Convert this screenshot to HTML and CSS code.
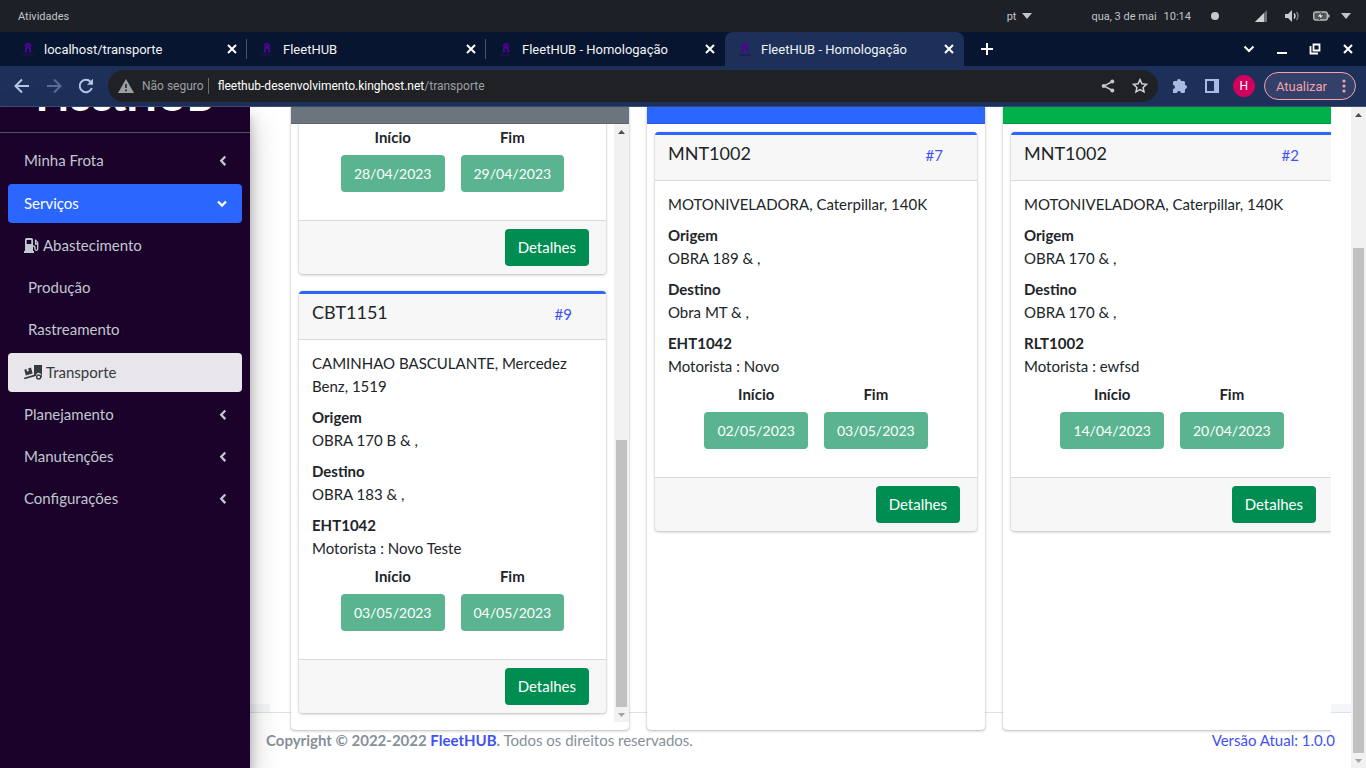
FILE: index.html
```html
<!DOCTYPE html>
<html lang="pt-BR">
<head>
<meta charset="utf-8">
<title>FleetHUB - Homologação</title>
<link rel="stylesheet" href="styles.css">
</head>
<body>
<svg class="defs" aria-hidden="true">
  <symbol id="logo" viewBox="0 0 16 16"><g fill="none" stroke="#4b058f" stroke-width="1.9"><path d="M5.500 5.600V4.600a2.600 2.600 0 0 1 5 0v1M5.800 11.500V9a2.200 2.200 0 0 1 4.400 0v2.500M5.500 7.500L8 5.200l2.500 2.300"/></g><path d="M2 14h12" stroke="#2c0b58" stroke-width="1.500" stroke-dasharray="1.500 .5"/></symbol>
  <symbol id="x" viewBox="0 0 12 12"><path d="M2 2l8 8M10 2l-8 8" stroke="currentColor" stroke-width="2" fill="none"/></symbol>
  <symbol id="left" viewBox="0 0 8 12"><path d="M6.300 1.500L2.200 5.800l4.100 4.300" fill="none" stroke="currentColor" stroke-width="2.300"/></symbol>
  <symbol id="tri" viewBox="0 0 10 6"><path d="M0 0h10L5 6z" fill="currentColor"/></symbol>
</svg>

<header class="desktop">
  <span>Atividades</span>
  <div class="desktop-right">
    <span class="lang">pt <svg width="10" height="6"><use href="#tri"/></svg></span>
    <span class="clock"><span>qua, 3 de mai</span><span>10:14</span></span>
    <svg class="dot" width="8" height="8"><circle cx="4" cy="4" r="4" fill="#c8c8c8"/></svg>
    <svg width="12" height="12" viewBox="0 0 12 12"><path d="M12 0v12H0z" fill="#6d6f72"/><path d="M9 3v9H0z" fill="#d0d0d0"/></svg>
    <svg class="vol" width="16" height="12" viewBox="0 0 16 12"><path d="M0 4h3l4-4v12L3 8H0z" fill="#ccc"/><path d="M9 3.500q2 2.500 0 5" fill="none" stroke="#ccc" stroke-width="1.500"/><path d="M11.500 2q3 4 0 8" fill="none" stroke="#777" stroke-width="1.500"/></svg>
    <svg class="bat" width="17" height="10" viewBox="0 0 17 10"><rect x=".7" y="1" width="13.600" height="8" rx="2" fill="#55575b" stroke="#bbb" stroke-width="1.400"/><path d="M15 3.500h1.500v3H15z" fill="#bbb"/><path d="M8 1L4 6h3l-1 3 5-5H8z" fill="#ddd" stroke="#333" stroke-width=".7"/></svg>
    <svg width="10" height="6"><use href="#tri"/></svg>
  </div>
</header>

<nav class="tabs" aria-label="Abas">
  <div class="tab"><svg width="16" height="16"><use href="#logo"/></svg><span class="tab-title">localhost/transporte</span><button class="plain" aria-label="Fechar"><svg width="12" height="12"><use href="#x"/></svg></button></div>
  <div class="tab"><svg width="16" height="16"><use href="#logo"/></svg><span class="tab-title">FleetHUB</span><button class="plain" aria-label="Fechar"><svg width="12" height="12"><use href="#x"/></svg></button></div>
  <div class="tab last"><svg width="16" height="16"><use href="#logo"/></svg><span class="tab-title">FleetHUB - Homologação</span><button class="plain" aria-label="Fechar"><svg width="12" height="12"><use href="#x"/></svg></button></div>
  <div class="tab active"><svg width="16" height="16"><use href="#logo"/></svg><span class="tab-title">FleetHUB - Homologação</span><button class="plain" aria-label="Fechar"><svg width="12" height="12"><use href="#x"/></svg></button></div>
  <button class="plain new" aria-label="Nova aba"><svg width="12" height="12"><path d="M6 0v12M0 6h12" stroke="#fff" stroke-width="2"/></svg></button>
  <div class="window-btns">
    <button class="plain" aria-label="Pesquisar abas"><svg width="12" height="12"><path d="M1.500 3.500L6 8l4.500-4.500" fill="none" stroke="#fff" stroke-width="2"/></svg></button>
    <button class="plain" aria-label="Minimizar"><svg width="12" height="12"><path d="M1 10h10" stroke="#fff" stroke-width="2"/></svg></button>
    <button class="plain" aria-label="Restaurar"><svg width="12" height="12"><path d="M4.500 1.500h6v6h-6zM1.500 3v7.500H9" fill="none" stroke="#fff" stroke-width="1.800"/></svg></button>
    <button class="plain" aria-label="Fechar janela"><svg width="12" height="12"><use href="#x"/></svg></button>
  </div>
</nav>

<div class="toolbar">
  <button class="plain nav-btn" aria-label="Voltar"><svg width="16" height="16"><path d="M15 8H2M8 1.500L1.500 8 8 14.500" fill="none" stroke="#b4c6e8" stroke-width="2"/></svg></button>
  <button class="plain nav-btn" aria-label="Avançar"><svg width="16" height="16"><path d="M1 8h13M8 1.500L14.500 8 8 14.500" fill="none" stroke="#5a6c94" stroke-width="2"/></svg></button>
  <button class="plain nav-btn" aria-label="Recarregar"><svg width="16" height="16"><path d="M13.800 10A6.200 6.200 0 1 1 12.500 3.700L14 5.200" fill="none" stroke="#b4c6e8" stroke-width="2"/><path d="M15 .8v6H9z" fill="#b4c6e8"/></svg></button>
  <div class="omnibox">
    <svg width="16" height="14" viewBox="0 0 16 14"><path d="M8 0l8 14H0z" fill="#9aa0a6"/><path d="M8 5v4M8 10.500v1.800" stroke="#202124" stroke-width="1.600"/></svg>
    <span class="insecure">Não seguro</span>
    <span class="url">fleethub-desenvolvimento.kinghost.net<span class="path">/transporte</span></span>
    <button class="plain" aria-label="Compartilhar"><svg width="14" height="14"><path d="M11.500 2.500L3 7l8.500 4.500" fill="none" stroke="#c4c7ca" stroke-width="1.500"/><g fill="#c4c7ca"><circle cx="11.300" cy="2.500" r="2"/><circle cx="2.700" cy="7" r="2"/><circle cx="11.300" cy="11.500" r="2"/></g></svg></button>
    <button class="plain" aria-label="Favoritar"><svg width="16" height="16"><path d="M8 1.600l1.900 4.200 4.600.5-3.400 3.100.9 4.500L8 11.600l-4 2.300.9-4.500L1.500 6.300l4.600-.5z" fill="none" stroke="#d0d2d5" stroke-width="1.500"/></svg></button>
  </div>
  <button class="plain ext" aria-label="Extensões"><svg width="16" height="16" viewBox="0 0 16 16"><path d="M1 4.500Q1 3 2.500 3H5a2 2 0 1 1 4 0h2.500Q13 3 13 4.500V7a2 2 0 1 1 0 4v2.500q0 1.500-1.500 1.500H9a2 2 0 1 0-4 0H1v-4a2 2 0 1 0 0-4z" fill="#a9bbe0"/></svg></button>
  <button class="plain ext" aria-label="Painel lateral"><svg width="14" height="14"><path d="M0 0h14v14H0zM2 2v10h7V2z" fill="#a9bbe0" fill-rule="evenodd"/></svg></button>
  <span class="avatar">H</span>
  <button class="update">Atualizar <svg width="4" height="14" fill="#f5a3a8"><circle cx="2" cy="2" r="1.600"/><circle cx="2" cy="7" r="1.600"/><circle cx="2" cy="12" r="1.600"/></svg></button>
</div>

<div class="page">
  <aside class="sidebar">
    <div class="brand"><span>FleetHUB</span></div>
    <nav class="menu">
      <a href="#">Minha Frota<svg class="caret" width="8" height="12"><use href="#left"/></svg></a>
      <a href="#" class="open">Serviços<svg class="caret" width="10" height="8"><path d="M1 1.500l4 4 4-4" fill="none" stroke="#fff" stroke-width="2.300"/></svg></a>
      <a href="#"><svg width="15" height="15" viewBox="0 0 15 15"><path d="M1 13V1.500Q1 0 2.500 0h5Q9 0 9 1.500V13h1v2H0v-2zM2.700 2v4h4.600V2z" fill="currentColor" fill-rule="evenodd"/><path d="M9 8q2 0 2 2v1q0 1.300 1.300 1.300T13.700 11V4.500L11 1.700M11.500 3v3H13.500" fill="none" stroke="currentColor" stroke-width="1.300"/></svg>Abastecimento</a>
      <a href="#" class="sub">Produção</a>
      <a href="#" class="sub">Rastreamento</a>
      <a href="#" class="current"><svg width="18" height="15" viewBox="0 0 18 15"><path d="M10 0h8v12.200h-1.200a2.700 2.700 0 1 0-4.800-1.200L.4 14.300 0 12.700l10-2.900z" fill="currentColor"/><circle cx="14.700" cy="12" r="2" fill="none" stroke="currentColor" stroke-width="1.400"/><path d="M.3 4.700l2-.6.8 2.500 1.800-.5L4.100 3.600l2.900-1L8.700 8.500 1.800 10.600z" fill="currentColor"/></svg>Transporte</a>
      <a href="#">Planejamento<svg class="caret" width="8" height="12"><use href="#left"/></svg></a>
      <a href="#">Manutenções<svg class="caret" width="8" height="12"><use href="#left"/></svg></a>
      <a href="#">Configurações<svg class="caret" width="8" height="12"><use href="#left"/></svg></a>
    </nav>
  </aside>

  <main class="main">
    <div class="content">
      <div class="board">
        <section class="column">
          <div class="column-head grey"></div>
          <div class="scroll-row">
            <div class="list end">
              <article class="card partial">
                <div class="dates"><div><b>Início</b><button class="date">28/04/2023</button></div><div><b>Fim</b><button class="date">29/04/2023</button></div></div>
                <footer><button class="details">Detalhes</button></footer>
              </article>
              <article class="card">
                <header><h3>CBT1151</h3><a href="#">#9</a></header>
                <div class="info">
                  <p>CAMINHAO BASCULANTE, Mercedez Benz, 1519</p>
                  <p><b>Origem</b><br>OBRA 170 B &amp; ,</p>
                  <p><b>Destino</b><br>OBRA 183 &amp; ,</p>
                  <p><b>EHT1042</b><br>Motorista : Novo Teste</p>
                </div>
                <div class="dates"><div><b>Início</b><button class="date">03/05/2023</button></div><div><b>Fim</b><button class="date">04/05/2023</button></div></div>
                <footer><button class="details">Detalhes</button></footer>
              </article>
            </div>
            <div class="scrollbar"><svg width="7" height="4"><path d="M0 4h7L3.500 0z" fill="#505050"/></svg><div class="track inner"><div class="thumb"></div></div><svg width="7" height="4"><path d="M0 0h7L3.500 4z" fill="#a3a3a3"/></svg></div>
          </div>
        </section>

        <section class="column">
          <div class="column-head blue"></div>
          <div class="list">
            <article class="card">
              <header><h3>MNT1002</h3><a href="#">#7</a></header>
              <div class="info">
                <p>MOTONIVELADORA, Caterpillar, 140K</p>
                <p><b>Origem</b><br>OBRA 189 &amp; ,</p>
                <p><b>Destino</b><br>Obra MT &amp; ,</p>
                <p><b>EHT1042</b><br>Motorista : Novo</p>
              </div>
              <div class="dates"><div><b>Início</b><button class="date">02/05/2023</button></div><div><b>Fim</b><button class="date">03/05/2023</button></div></div>
              <footer><button class="details">Detalhes</button></footer>
            </article>
          </div>
        </section>

        <section class="column">
          <div class="column-head green"></div>
          <div class="list">
            <article class="card">
              <header><h3>MNT1002</h3><a href="#">#2</a></header>
              <div class="info">
                <p>MOTONIVELADORA, Caterpillar, 140K</p>
                <p><b>Origem</b><br>OBRA 170 &amp; ,</p>
                <p><b>Destino</b><br>OBRA 170 &amp; ,</p>
                <p><b>RLT1002</b><br>Motorista : ewfsd</p>
              </div>
              <div class="dates"><div><b>Início</b><button class="date">14/04/2023</button></div><div><b>Fim</b><button class="date">20/04/2023</button></div></div>
              <footer><button class="details">Detalhes</button></footer>
            </article>
          </div>
        </section>
      </div>
    </div>
    <footer class="page-footer">
      <span><b>Copyright © 2022-2022 <a href="#">FleetHUB</a>.</b> Todos os direitos reservados.</span>
      <a href="#">Versão Atual: 1.0.0</a>
    </footer>
  </main>

  <div class="scrollbar"><svg width="7" height="4"><path d="M0 4h7L3.500 0z" fill="#505050"/></svg><div class="track outer"><div class="thumb"></div></div><svg width="7" height="4"><path d="M0 0h7L3.500 4z" fill="#a3a3a3"/></svg></div>
</div>
</body>
</html>
```
FILE: styles.css
```css
* { box-sizing: border-box; }

body {
  margin: 0;
  height: 100vh;
  display: flex;
  flex-direction: column;
  overflow: hidden;
  color: #212529;
  font: 15px/23px Lato, "Open Sans", sans-serif;
}

svg { display: block; flex: none; }
.defs { position: absolute; width: 0; height: 0; }
button { font: inherit; }
a { color: #3f51f5; text-decoration: none; }

.plain {
  display: flex;
  align-items: center;
  justify-content: center;
  padding: 0;
  border: 0;
  background: none;
  color: #fff;
}

/* Desktop bar */
.desktop, .tabs, .toolbar {
  flex: none;
  display: flex;
  align-items: center;
  font-family: Roboto, sans-serif;
}

.desktop {
  justify-content: space-between;
  height: 32px;
  padding: 0 15px 0 18px;
  background: #1d2027;
  color: #c3c4c6;
  font-size: 11px;
}

.desktop-right, .lang, .clock { display: flex; align-items: center; }
.lang { gap: 6px; margin-right: 59px; }
.clock { gap: 7px; margin-right: 20px; }
.dot { margin-right: 36px; }
.vol { margin-left: 18px; }
.bat { margin: 0 11px 0 12px; }

/* Browser tabs */
.tabs {
  height: 34px;
  padding-left: 8px;
  background: #081530;
  color: #f1f3f5;
  font-size: 13px;
}

.tab {
  flex: 0 1 239px;
  display: flex;
  align-items: center;
  gap: 8px;
  height: 20px;
  min-width: 0;
  padding: 0 8px 0 12px;
  border-right: 1px solid #47526a;
}

.tab.last { border-color: transparent; }
.tab-title { flex: 1; min-width: 0; white-space: nowrap; overflow: hidden; }
.tab.active {
  height: 34px;
  border-color: transparent;
  border-radius: 8px 8px 0 0;
  background: #1d3059;
}

.new { margin-left: 17px; }
.window-btns { display: flex; gap: 21px; margin-left: auto; padding-right: 12px; }

/* Address bar */
.toolbar {
  height: 41px;
  padding: 0 10px 0 14px;
  border-bottom: 1px solid #3c4f78;
  background: #1d3059;
  font-size: 12px;
}

.nav-btn { width: 16px; margin-right: 16px; }

.omnibox {
  flex: 1;
  display: flex;
  align-items: center;
  height: 32px;
  margin-left: -2px;
  padding: 0 10px;
  border-radius: 16px;
  background: #202124;
  color: #fff;
}

.insecure {
  margin: 0 9px 0 8px;
  padding-right: 4px;
  border-right: 1px solid #6b6f74;
  color: #9aa0a6;
  line-height: 16px;
  white-space: nowrap;
}

.url { flex: 1; }
.path { color: #9aa0a6; }
.omnibox .plain { margin-left: 17px; }
.ext { width: 16px; margin-left: 14px; }
.ext + .ext { margin-left: 16px; }

.avatar {
  width: 22px;
  height: 22px;
  margin: 0 9px 0 13px;
  border-radius: 50%;
  background: #d0005c;
  color: #fff;
  font: 12px/22px Roboto, sans-serif;
  text-align: center;
}

.update {
  display: flex;
  align-items: center;
  gap: 15px;
  height: 28px;
  padding: 0 9px 0 11px;
  border: 1px solid #f5a3a8;
  border-radius: 14px;
  background: #33406a;
  color: #f5a3a8;
  font-size: 13px;
}

/* Application */
.page { flex: 1; display: flex; min-height: 0; }

.sidebar {
  z-index: 2;
  flex: none;
  width: 250px;
  background: #1a022a;
  box-shadow: 0 14px 28px rgba(0, 0, 0, .25), 0 10px 10px rgba(0, 0, 0, .22);
}

.brand {
  display: flex;
  align-items: flex-end;
  height: 26px;
  padding: 0 36px 18px;
  overflow: hidden;
  border-bottom: 1px solid #4b545c;
  color: #fff;
  font-size: 40px;
  font-weight: 900;
  line-height: 36px;
}

.menu {
  display: flex;
  flex-direction: column;
  gap: 3px;
  padding: 8px;
}

.menu a {
  display: flex;
  align-items: center;
  gap: 4px;
  height: 39px;
  padding: 0 16px;
  border-radius: 4px;
  color: #c2c7d0;
}

.menu .caret { margin: 0 -1px 0 auto; }
.menu .sub { padding-left: 20px; }
.menu .open, .menu .current { margin-top: 1px; }
.menu .open { background: #2a66ff; color: #fff; }
.menu .current { background: #e8e6ea; color: #343a40; }

.main { flex: 1; display: flex; flex-direction: column; min-width: 0; }

.content {
  z-index: 1;
  flex: 1;
  display: flex;
  min-height: 0;
  padding: 0 20px;
  background: linear-gradient(to top, #f4f6f9 8px, #fff 8px);
}

.board {
  flex: 1;
  display: flex;
  gap: 18px;
  min-width: 0;
  padding-left: 21px;
  overflow-x: clip;
  background: #fff;
}

.column {
  flex: 0 0 338px;
  display: flex;
  flex-direction: column;
  margin-bottom: -18px;
  padding-bottom: 8px;
  border-radius: 0 0 4px 4px;
  background: #fff;
  box-shadow: 0 0 1px rgba(0, 0, 0, .3), 0 1px 3px rgba(0, 0, 0, .25);
}

.column-head {
  flex: none;
  height: 17px;
  border-bottom: 1px solid rgba(0, 0, 0, .125);
}

.grey { background: #6c757d; }
.blue { background: #2a66ff; }
.green { background: #00b04a; }

.scroll-row { flex: 1; display: flex; min-height: 0; }

.list { flex: 1; min-width: 0; padding: 8px; }

.end {
  display: flex;
  flex-direction: column;
  justify-content: flex-end;
  gap: 17px;
  padding: 0 8px 9px;
  overflow: hidden;
}

.card {
  border-top: 3px solid #2a66ff;
  border-radius: 4px;
  background: #fff;
  box-shadow: 0 0 1px rgba(0, 0, 0, .3), 0 1px 3px rgba(0, 0, 0, .25);
}

.card.partial { padding-top: 8px; border-top: 0; border-radius: 0 0 4px 4px; }

.card header {
  display: flex;
  align-items: center;
  justify-content: space-between;
  height: 46px;
  padding: 0 34px 8px 13px;
  border-bottom: 1px solid #d9d9d9;
  background: #f7f7f7;
}

.card h3 { margin: 0; font-size: 18px; font-weight: 400; }
.card header a { padding-top: 3px; }

.info { padding: 12px 13px 5px; }
.info p { margin: 0 0 8px; }
.info p:last-child { margin: 0; }

.dates {
  display: flex;
  justify-content: center;
  gap: 16px;
  padding-bottom: 28px;
}

.dates > div { display: flex; flex-direction: column; gap: 6px; text-align: center; }

.date, .details {
  height: 37px;
  padding: 0 13px;
  border: 0;
  border-radius: 4px;
  background: #008d52;
  color: #fff;
}

.date { min-width: 103px; background: #5ab490; font-size: 14px; }

.card footer {
  display: flex;
  justify-content: flex-end;
  padding: 8px 17px;
  border-top: 1px solid #d9d9d9;
  border-radius: 0 0 4px 4px;
  background: #f7f7f7;
}

.page-footer {
  display: flex;
  justify-content: space-between;
  padding: 16px;
  border-top: 1px solid #dee2e6;
  color: #869099;
}

/* Scrollbars */
.scrollbar {
  flex: none;
  display: flex;
  flex-direction: column;
  align-items: center;
  width: 15px;
  padding: 6px 0 5px;
  background: #f1f1f1;
}

.track {
  flex: 1;
  display: flex;
  flex-direction: column;
  justify-content: flex-end;
  width: 11px;
  padding: 5px 0 6px;
}

.thumb { background: #c1c1c1; }
.inner .thumb { height: 47%; }
.outer .thumb { height: 80%; }
```
